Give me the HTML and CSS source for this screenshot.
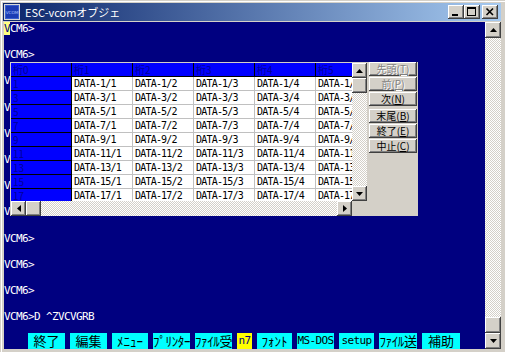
FILE: index.html
```html
<!DOCTYPE html>
<html lang="ja">
<head>
<meta charset="utf-8">
<title>ESC-vcomオブジェ</title>
<link rel="stylesheet" href="styles.css">
</head>
<body>
<div class="window">
  <div class="titlebar">
    <svg class="appicon" viewBox="0 0 16 16" width="16" height="16">
      <rect x="0.5" y="0.5" width="15" height="15" fill="#3a5fcd" stroke="#d8d8d8"/>
      <rect x="2" y="2" width="12" height="12" fill="#1c3cb4"/>
      <text x="8" y="9.6" font-size="4.2" text-anchor="middle" fill="#a8c0ff" font-family="DejaVu Sans">VCOM</text>
    </svg>
    <span class="title">ESC-vcomオブジェ</span>
    <div class="tbtns">
      <div class="tbtn"><svg width="16" height="14"><rect x="4" y="9" width="6" height="2" fill="#000"/></svg></div>
      <div class="tbtn"><svg width="16" height="14"><rect x="3.5" y="2.5" width="8" height="8" fill="none" stroke="#000"/><rect x="3" y="2" width="9" height="2" fill="#000"/></svg></div>
      <div class="tbtn close"><svg width="16" height="14"><path d="M4.5 3.5 L11 10 M11 3.5 L4.5 10" stroke="#000" stroke-width="1.6"/></svg></div>
    </div>
  </div>
  <div class="client">
    <div class="term">
      <div class="lines">
        <div class="line"><span class="cursor">V</span>CM6&gt;</div>
        <div class="line">VCM6&gt;</div>
        <div class="line">VCM6&gt;</div>
        <div class="line">VCM6&gt;</div>
        <div class="line">VCM6&gt;</div>
        <div class="line">VCM6&gt;</div>
        <div class="line">VCM6&gt;</div>
        <div class="line">VCM6&gt;</div>
        <div class="line">VCM6&gt;</div>
        <div class="line">VCM6&gt;</div>
        <div class="line">VCM6&gt;</div>
        <div class="line">VCM6&gt;D ^ZVCVGRB</div>
      </div>
      <div class="fkeys">
        <div class="fk">終了</div>
        <div class="fk">編集</div>
        <div class="fk hk">ﾒﾆｭｰ</div>
        <div class="fk hk tight">ﾌﾟﾘﾝﾀｰ</div>
        <div class="fk hk tight">ﾌｧｲﾙ受</div>
        <div class="fk lt n7">n7</div>
        <div class="fk hk">ﾌｫﾝﾄ</div>
        <div class="fk lt">MS-DOS</div>
        <div class="fk lt">setup</div>
        <div class="fk hk tight">ﾌｧｲﾙ送</div>
        <div class="fk">補助</div>
      </div>

      <div class="dialog">
        <div class="grid">
          <div class="table">
            <div class="hd">桁0</div><div class="hd">桁1</div><div class="hd">桁2</div><div class="hd">桁3</div><div class="hd">桁4</div><div class="hd">桁5</div>
            <div class="rh">1</div><div class="c">DATA-1/1</div><div class="c">DATA-1/2</div><div class="c">DATA-1/3</div><div class="c">DATA-1/4</div><div class="c">DATA-1/5</div>
            <div class="rh">3</div><div class="c">DATA-3/1</div><div class="c">DATA-3/2</div><div class="c">DATA-3/3</div><div class="c">DATA-3/4</div><div class="c">DATA-3/5</div>
            <div class="rh">5</div><div class="c">DATA-5/1</div><div class="c">DATA-5/2</div><div class="c">DATA-5/3</div><div class="c">DATA-5/4</div><div class="c">DATA-5/5</div>
            <div class="rh">7</div><div class="c">DATA-7/1</div><div class="c">DATA-7/2</div><div class="c">DATA-7/3</div><div class="c">DATA-7/4</div><div class="c">DATA-7/5</div>
            <div class="rh">9</div><div class="c">DATA-9/1</div><div class="c">DATA-9/2</div><div class="c">DATA-9/3</div><div class="c">DATA-9/4</div><div class="c">DATA-9/5</div>
            <div class="rh">11</div><div class="c">DATA-11/1</div><div class="c">DATA-11/2</div><div class="c">DATA-11/3</div><div class="c">DATA-11/4</div><div class="c">DATA-11/5</div>
            <div class="rh">13</div><div class="c">DATA-13/1</div><div class="c">DATA-13/2</div><div class="c">DATA-13/3</div><div class="c">DATA-13/4</div><div class="c">DATA-13/5</div>
            <div class="rh">15</div><div class="c">DATA-15/1</div><div class="c">DATA-15/2</div><div class="c">DATA-15/3</div><div class="c">DATA-15/4</div><div class="c">DATA-15/5</div>
            <div class="rh">17</div><div class="c">DATA-17/1</div><div class="c">DATA-17/2</div><div class="c">DATA-17/3</div><div class="c">DATA-17/4</div><div class="c">DATA-17/5</div>
          </div>
          <div class="gvs">
            <div class="sbtn sm"><svg width="7" height="4"><polygon points="0,4 3.5,0 7,4"/></svg></div>
            <div class="thumb sm"></div>
            <div class="track"></div>
            <div class="sbtn sm"><svg width="7" height="4"><polygon points="0,0 7,0 3.5,4"/></svg></div>
          </div>
          <div class="ghs">
            <div class="sbtn sm"><svg width="4" height="7"><polygon points="4,0 4,7 0,3.5"/></svg></div>
            <div class="thumb sm"></div>
            <div class="track"></div>
            <div class="sbtn sm"><svg width="4" height="7"><polygon points="0,0 4,3.5 0,7"/></svg></div>
          </div>
          <div class="corner"></div>
        </div>
        <div class="panel">
          <div class="pbtn off">先頭(<u>T</u>)</div>
          <div class="pbtn off">前(<u>P</u>)</div>
          <div class="pbtn">次(<u>N</u>)</div>
          <div class="pbtn sep">末尾(<u>B</u>)</div>
          <div class="pbtn">終了(<u>E</u>)</div>
          <div class="pbtn">中止(<u>C</u>)</div>
        </div>
      </div>
    </div>
    <div class="mscroll">
      <div class="sbtn"><svg width="7" height="4"><polygon points="0,4 3.5,0 7,4"/></svg></div>
      <div class="track"></div>
      <div class="thumb"></div>
      <div class="sbtn"><svg width="7" height="4"><polygon points="0,0 7,0 3.5,4"/></svg></div>
    </div>
  </div>
</div>
</body>
</html>
```

FILE: styles.css
```css
* { box-sizing: border-box; margin: 0; padding: 0; }
html, body { width: 505px; height: 352px; overflow: hidden; }
body { background: #d4d0c8; font-family: "Noto Sans CJK JP", sans-serif; }

.window {
  width: 505px; height: 352px;
  padding: 3px 4px 3px 3px;
  background: #d4d0c8;
  box-shadow: inset 1px 1px #d4d0c8, inset 2px 2px #ffffff;
  display: flex; flex-direction: column;
}

.titlebar {
  height: 18px; flex: none;
  display: flex; align-items: center;
  background: linear-gradient(to right, #0a246a, #a6caf0);
  padding: 0 3px 0 1px;
}
.appicon { width: 16px; height: 16px; flex: none; display: block; }
.title {
  margin-left: 5px; color: #ffffff;
  font-family: "Noto Sans CJK JP", sans-serif;
  font-size: 11px; line-height: 18px; white-space: nowrap;
}
.tbtns { margin-left: auto; display: flex; }
.tbtn {
  width: 16px; height: 14px; background: #d4d0c8;
  box-shadow: inset -1px -1px #404040, inset 1px 1px #ffffff, inset -2px -2px #808080;
}
.tbtn svg { display: block; }
.tbtn.close { margin-left: 2px; }

.client { margin: 1px 0 0 1px; height: 327px; flex: none; display: flex; }

.term {
  flex: 1; position: relative; overflow: hidden;
  background: #000080;
  display: flex; flex-direction: column;
}
.line {
  height: 13.1px; line-height: 13.1px; margin-bottom: 13.1px;
  color: #ffffff; white-space: pre;
  font-family: "DejaVu Sans Mono", monospace; font-size: 11px; letter-spacing: -0.62px;
}
.line:last-child { margin-bottom: 0; }
.cursor { background: #ffff80; color: #000080; }

.fkeys {
  margin-top: auto; margin-left: 24px; height: 16px;
  display: grid;
  grid-template-columns: 37px 37px 36px 37px 37px 15px 35px 37px 35px 38px 38px;
  column-gap: 5px;
}
.fk {
  height: 16px;
  background: #00ffff; color: #000000;
  font-family: "Noto Sans CJK JP", sans-serif; font-size: 13px;
  line-height: 16px; text-align: center; white-space: nowrap;
}
.fk.hk { font-size: 13px; }
.fk.tight { letter-spacing: -0.4px; }
.fk.lt { font-family: "DejaVu Sans Mono", monospace; font-size: 11px; letter-spacing: -0.62px; }
.fk.n7 { background: #ffff00; color: #000080; }

.dialog { position: absolute; left: 6px; top: 40px; display: flex; }

.grid {
  width: 357px; height: 154px;
  background: #d4d0c8;
  padding: 1px 0 0 1px;
  display: grid;
  grid-template-columns: 341px 15px;
  grid-template-rows: 138px 15px;
}
.table {
  overflow: hidden; background: #ffffff;
  display: grid;
  grid-template-columns: repeat(6, 61px);
  grid-auto-rows: 14px;
}
.table > div {
  padding-left: 2px; line-height: 13px; white-space: nowrap; overflow: hidden;
}
.hd, .rh {
  background: #0000ff; color: #000098;
  border-right: 1px solid #000000; border-bottom: 1px solid #000000;
  font-family: "Noto Sans CJK JP", sans-serif; font-size: 10px;
}
.c {
  background: #ffffff; color: #000000;
  border-right: 1px solid #c0c0c0; border-bottom: 1px solid #c0c0c0;
  font-family: "DejaVu Sans Mono", monospace; font-size: 10px; letter-spacing: -0.8px;
}

.track {
  flex: 1;
  background: repeating-conic-gradient(#d4d0c8 0 25%, #ffffff 0 50%) 0 0 / 2px 2px;
}
.gvs { display: flex; flex-direction: column; }
.ghs { display: flex; }
.corner { background: #d4d0c8; }

.sbtn, .thumb {
  width: 16px; height: 16px; flex: none; background: #d4d0c8;
  box-shadow: inset -1px -1px #404040, inset 1px 1px #ffffff, inset -2px -2px #808080;
  display: flex; align-items: center; justify-content: center;
}
.sbtn.sm, .thumb.sm { width: 15px; height: 15px; }
.sbtn svg { display: block; fill: #000000; }

.mscroll { width: 16px; flex: none; display: flex; flex-direction: column; }

.panel {
  width: 51px; height: 154px; background: #d4d0c8;
  padding: 0 1px 0 2px;
  display: flex; flex-direction: column; gap: 1px;
}
.pbtn {
  height: 14px; background: #d4d0c8; color: #000000;
  box-shadow: inset -1px -1px #404040, inset 1px 1px #ffffff, inset -2px -2px #808080;
  font-family: "Noto Sans CJK JP", sans-serif; font-size: 10px;
  line-height: 14px; text-align: center; white-space: nowrap;
}
.pbtn.sep { margin-top: 2px; }
.pbtn.off { color: #808080; text-shadow: 1px 1px #ffffff; }
```
